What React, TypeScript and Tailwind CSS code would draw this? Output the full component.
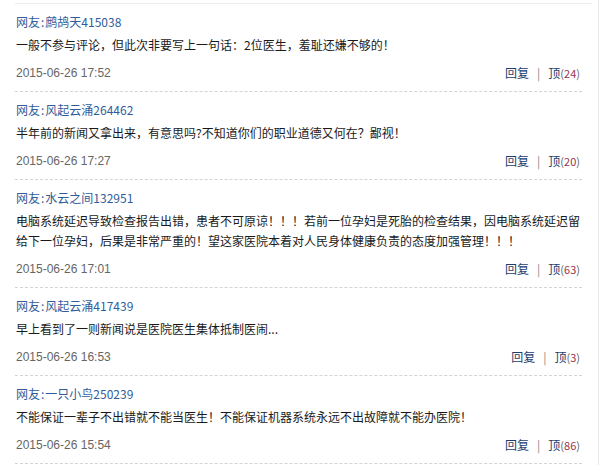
const comments = [
  {
    name: "鹧鸪天415038",
    text: "一般不参与评论，但此次非要写上一句话：2位医生，羞耻还嫌不够的！",
    time: "2015-06-26 17:52",
    up: 24,
  },
  {
    name: "风起云涌264462",
    text: "半年前的新闻又拿出来，有意思吗?不知道你们的职业道德又何在？鄙视！",
    time: "2015-06-26 17:27",
    up: 20,
  },
  {
    name: "水云之间132951",
    text: "电脑系统延迟导致检查报告出错，患者不可原谅！！！若前一位孕妇是死胎的检查结果，因电脑系统延迟留给下一位孕妇，后果是非常严重的！望这家医院本着对人民身体健康负责的态度加强管理！！！",
    time: "2015-06-26 17:01",
    up: 63,
  },
  {
    name: "风起云涌417439",
    text: "早上看到了一则新闻说是医院医生集体抵制医闹...",
    time: "2015-06-26 16:53",
    up: 3,
  },
  {
    name: "一只小鸟250239",
    text: "不能保证一辈子不出错就不能当医生！不能保证机器系统永远不出故障就不能办医院！",
    time: "2015-06-26 15:54",
    up: 86,
  },
];

export default function App() {
  return (
    <div
      className="w-[599px] h-[465px] overflow-hidden bg-white border-r border-[#e6e6e6] text-[12px]"
      style={{ fontFamily: '"Noto Sans CJK SC", "Liberation Sans", sans-serif' }}
    >
      <div className="pt-[3px] pl-[15px]">
        <div className="w-[577px] h-px bg-[#ececec]" />
        <ul className="w-[567px]">
          {comments.map((c) => (
            <li
              key={c.time}
              className="pt-[8px] pb-[8px] border-b border-dashed border-[#d4d4d4]"
            >
              <div className="pl-px leading-[20px] text-[#2f5c9b]">
                网友<span className="mx-[1px]">:</span>
                {c.name}
              </div>
              <p className="pl-px mt-[3px] leading-[20px] text-[#1a1a1a]">{c.text}</p>
              <div className="pl-px mt-[8px] flex items-center justify-between leading-[20px]">
                <span
                  className="text-[12px] text-[#666]"
                  style={{ fontFamily: '"Liberation Sans", sans-serif' }}
                >
                  {c.time}
                </span>
                <span className="flex items-center pr-[2px] text-[#1d3d6d]">
                  <a className="cursor-pointer">回复</a>
                  <span className="mx-[8px] text-[#888]">|</span>
                  <a className="cursor-pointer">顶</a>
                  <span className="text-[11px] text-[#666]">
                    (<span className="text-[#9b3348]">{c.up}</span>)
                  </span>
                </span>
              </div>
            </li>
          ))}
        </ul>
      </div>
    </div>
  );
}
